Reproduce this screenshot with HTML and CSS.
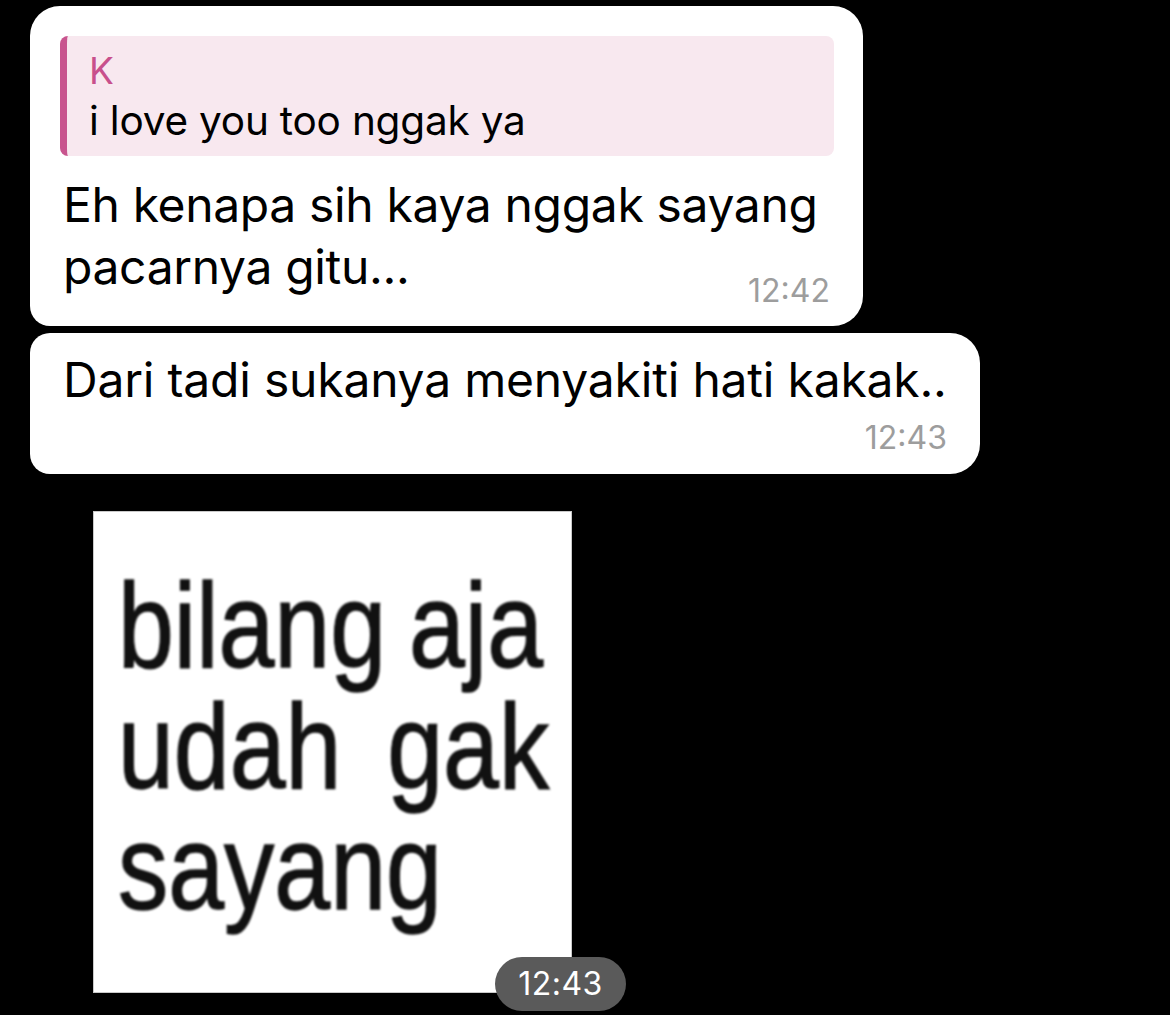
FILE: index.html
```html
<!DOCTYPE html>
<html lang="id">
<head>
<meta charset="utf-8">
<title>Chat</title>
<link rel="stylesheet" href="styles.css">
</head>
<body>
<main class="chat">
  <div class="bubble bubble-first">
    <div class="reply">
      <div class="reply-name">K</div>
      <div class="reply-text">i love you too nggak ya</div>
    </div>
    <div class="msg">Eh kenapa sih kaya nggak sayang<br>pacarnya gitu...</div>
    <div class="time time-inline">12:42</div>
  </div>
  <div class="bubble bubble-second">
    <div class="msg">Dari tadi sukanya menyakiti hati kakak..</div>
    <div class="time time-below">12:43</div>
  </div>
  <div class="sticker">
    <div class="sticker-img">
      <div class="sticker-text">bilang aja
udah  gak
sayang</div>
    </div>
    <div class="sticker-time">12:43</div>
  </div>
</main>
</body>
</html>
```

FILE: styles.css
```css
html, body {
  margin: 0;
  padding: 0;
  background: #000;
}

body {
  width: 1170px;
  height: 1015px;
  overflow: hidden;
  font-family: Inter, "Noto Sans", sans-serif;
}

.chat {
  display: flex;
  flex-direction: column;
  align-items: flex-start;
  gap: 7px;
  padding: 6px 0 0 30px;
}

.bubble {
  background: #fff;
  color: #000;
  box-sizing: border-box;
}

.bubble-first {
  width: 833px;
  height: 320px;
  padding: 30px 33px 0 33px;
  border-radius: 30px 30px 30px 20px;
}

.bubble-second {
  width: 950px;
  height: 141px;
  padding: 16px 33px 0 33px;
  border-radius: 20px 30px 30px 20px;
}

.reply {
  margin-left: -3px;
  margin-right: -4px;
  height: 120px;
  box-sizing: border-box;
  background: #f8e8ef;
  border-left: 7px solid #c8548e;
  border-radius: 8px;
  padding: 8px 20px 12px 22px;
}

.reply-name {
  color: #c8508c;
  font-size: 37px;
  line-height: 54px;
}

.reply-text {
  color: #000;
  font-size: 40.5px;
  line-height: 46px;
  letter-spacing: -0.2px;
}

.msg {
  font-size: 48px;
  line-height: 62px;
  letter-spacing: -0.2px;
  white-space: nowrap;
}

.bubble-first .msg {
  margin-top: 18px;
  letter-spacing: -0.35px;
}

.time {
  color: #9d9d9d;
  font-size: 32px;
  line-height: 40px;
  text-align: right;
}

.time-inline {
  margin-top: -27px;
}

.time-below {
  margin-top: 7px;
}

.sticker {
  position: relative;
  margin: 30px 0 0 63px;
  width: 534px;
  height: 500px;
}

.sticker-img {
  width: 479px;
  height: 482px;
  box-sizing: border-box;
  padding: 54px 0 0 25px;
  background: #fff;
  box-shadow: inset 0 0 0 1px #c9c9c9;
  overflow: hidden;
}

.sticker-text {
  font-family: "Liberation Sans", Arial, sans-serif;
  font-size: 121px;
  line-height: 121px;
  color: #111;
  white-space: pre;
  word-spacing: -6px;
  -webkit-text-stroke: 1.4px #111;
  transform: scaleX(0.83);
  transform-origin: left top;
  filter: blur(1.3px);
}

.sticker-time {
  position: absolute;
  left: 402px;
  top: 446px;
  width: 131px;
  height: 54px;
  border-radius: 27px;
  background: #5a5a5a;
  color: #fff;
  font-size: 32px;
  line-height: 54px;
  text-align: center;
  letter-spacing: 0.5px;
}
```
